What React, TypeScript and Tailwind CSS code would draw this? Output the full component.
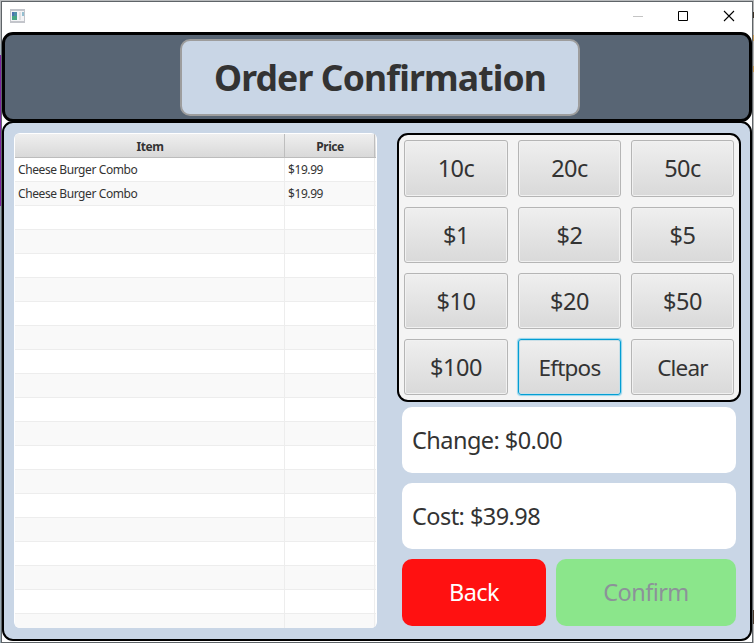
import { clsx } from "clsx";

const orders = [
  { item: "Cheese Burger Combo", price: "$19.99" },
  { item: "Cheese Burger Combo", price: "$19.99" },
];

const keys = ["10c", "20c", "50c", "$1", "$2", "$5", "$10", "$20", "$50", "$100", "Eftpos", "Clear"];

function TitleBar() {
  return (
    <div className="flex h-[30px] shrink-0 items-center justify-between bg-white pl-2">
      <svg width="15" height="14" viewBox="0 0 15 14" shapeRendering="crispEdges" className="-mt-0.5">
        <rect width="15" height="14" fill="#c3c5cb" />
        <rect x="1" y="2" width="13" height="10" fill="#f4f4f6" />
        <rect x="2" y="3" width="5" height="8" fill="#4d8fa8" />
        <rect x="2" y="7" width="5" height="4" fill="#48a583" />
        <rect x="2" y="3" width="2" height="4" fill="#4b72ad" />
        <rect x="9" y="3" width="2" height="8" fill="#e0e0e2" />
        <rect x="12" y="3" width="2" height="4" fill="#94bfd0" />
      </svg>
      <svg width="120" height="12" viewBox="0 0 120 12" fill="none" className="-mt-0.5">
        <path d="M1 6.5h10" stroke="#c4c4c4" />
        <path d="M46.5 1.5h9v9h-9z" stroke="#000" />
        <path d="M92 1l10 10M102 1L92 11" stroke="#000" strokeWidth="1.1" />
      </svg>
    </div>
  );
}

function OrderTable() {
  return (
    <div className="flex h-[495px] w-[363px] flex-col overflow-hidden rounded-[6px] bg-white pt-px pl-px text-[12px] tracking-[-0.41px] whitespace-nowrap text-[#333]">
      <div className="flex h-[24px] w-[361px] shrink-0 border-b border-[#bcbcbc] bg-linear-to-b from-[#efefef] to-[#d9d9d9] font-bold">
        <div className="flex w-[270px] items-center justify-center border-r border-[#bebebe] pt-0.5 pl-px">Item</div>
        <div className="flex w-[90px] items-center justify-center border-r border-[#bebebe] pt-0.5 pl-px">Price</div>
      </div>
      {Array.from({ length: 20 }, (_, i) => (
        <div
          key={i}
          className={clsx("flex h-6 w-[361px] shrink-0 border-b border-[#ededed]", i % 2 ? "bg-[#f9f9f9]" : "bg-white")}
        >
          <div className="flex w-[270px] items-center border-r border-[#ededed] pl-[3px]">{orders[i]?.item}</div>
          <div className="flex w-[90px] items-center border-r border-[#ededed] pl-[3px]">{orders[i]?.price}</div>
        </div>
      ))}
    </div>
  );
}

function Keypad() {
  return (
    <div className="grid h-[269px] w-[344px] grid-cols-[104px_103px_103px] grid-rows-[57px_56px_56px_56px] gap-[10px] rounded-[11px] border-2 border-black bg-[#f4f4f4] p-[5px]">
      {keys.map((label) => (
        <button
          key={label}
          className={clsx(
            "flex items-center justify-center rounded-[3px] border bg-linear-to-b from-[#efefef] to-[#d9d9d9] pt-px text-[#333]",
            /^[A-Z]/.test(label) ? "text-[22.5px] tracking-[-0.8px]" : "text-[23.5px] tracking-[-0.5px]",
            label === "Eftpos"
              ? "border-[#039ed3] shadow-[0_0_1px_1px_#8fd3ec,inset_0_0_0_1px_#c9dfe7]"
              : "border-[#b5b5b5] shadow-[inset_0_0_0_1px_#f1f1f1]",
          )}
        >
          {label}
        </button>
      ))}
    </div>
  );
}

export default function App() {
  return (
    <div className="flex h-[643px] w-[754px] overflow-hidden bg-[#b9bbbd] pt-px font-['Noto_Sans','Open_Sans',sans-serif]">
      <div className="flex w-px shrink-0 flex-col">
        <div className="h-[43px] bg-[#b5b8ba]" />
        <div className="h-[11px] bg-[#a5b4be]" />
        <div className="h-[151px] bg-[#7b219f]" />
        <div className="flex-1 bg-[#98a8b2]" />
      </div>
      <div className="flex w-[752px] shrink-0 flex-col border border-[#5f6468] bg-white">
        <TitleBar />
        <header className="flex h-[90px] shrink-0 justify-center rounded-[11px] border-[3px] border-black bg-[#586574] pt-1 pl-1.5">
          <h1 className="flex h-[77px] w-[400px] items-center justify-center rounded-[10px] border-2 border-[#9d9d9d] bg-[#c9d6e6] text-[35.5px] font-bold tracking-[-0.85px] whitespace-nowrap text-[#333]">
            Order Confirmation
          </h1>
        </header>
        <main className="-mt-px flex h-[520px] shrink-0 rounded-[11px] border-2 border-black bg-[#c9d6e6] pt-2.5 pl-2.5">
          <OrderTable />
          <section className="ml-5 w-[344px]">
            <Keypad />
            <div className="mt-[5px] ml-[5px] flex w-[334px] flex-col gap-2.5 text-[23.5px] tracking-[-0.55px] text-[#333]">
              <div className="flex h-[66px] items-center rounded-[10px] bg-white pt-0.5 pl-2.5">Change: $0.00</div>
              <div className="flex h-[66px] items-center rounded-[10px] bg-white pt-0.5 pl-2.5">Cost: $39.98</div>
              <div className="flex h-[67px] gap-2.5">
                <button className="flex w-[144px] items-center justify-center rounded-[10px] bg-[#ff1111] pt-px text-white">
                  Back
                </button>
                <button className="flex w-[180px] items-center justify-center rounded-[10px] bg-[#8be68b] pt-px text-[#8c9299]">
                  Confirm
                </button>
              </div>
            </div>
          </section>
        </main>
      </div>
      <div className="flex w-px shrink-0 flex-col bg-[#b5b5b5]">
        <div className="mt-[11px] h-1.5 bg-[#3a3024]" />
        <div className="mt-[17px] h-1.5 bg-[#c79a55]" />
        <div className="mt-[25px] h-1.5 bg-[#c79a55]" />
        <div className="mt-[538px] h-3.5 bg-[#4b3a2c]" />
      </div>
    </div>
  );
}
